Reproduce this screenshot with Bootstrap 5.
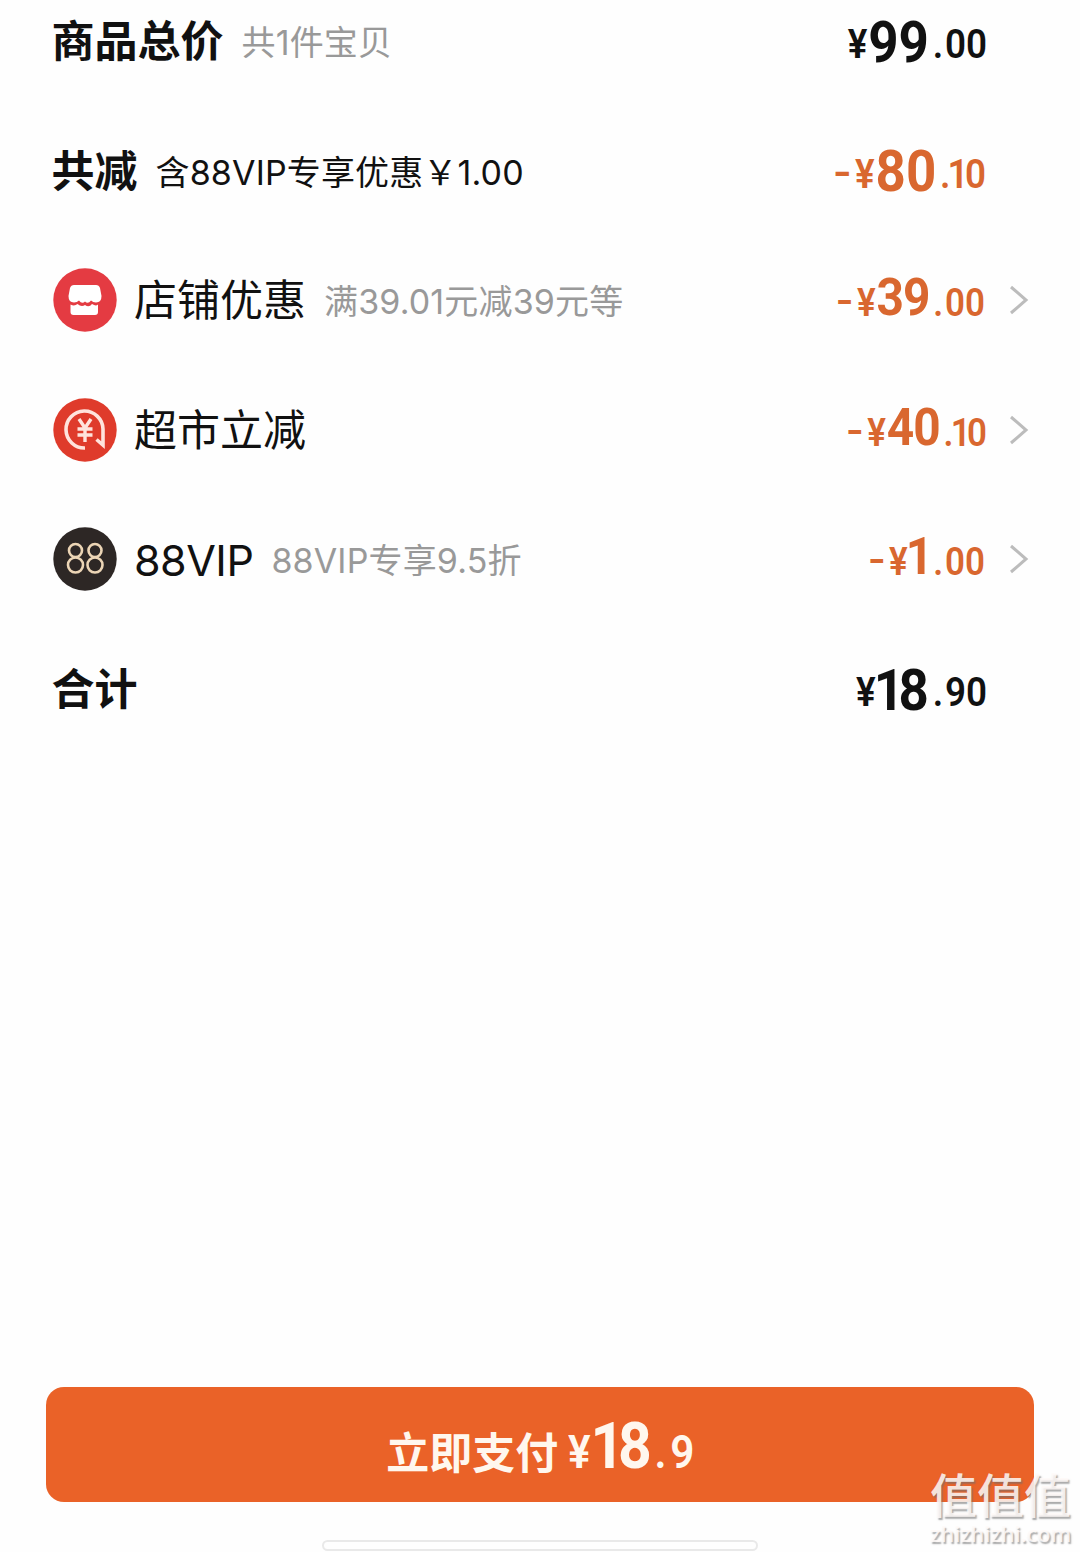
<!DOCTYPE html>
<html lang="zh-CN">
<head>
<meta charset="utf-8">
<meta name="viewport" content="width=device-width, initial-scale=1">
<title>价格明细</title>
<link rel="stylesheet" href="https://cdn.jsdelivr.net/npm/bootstrap@5.3.0/dist/css/bootstrap.min.css">
<style>
body{width:1080px;height:1552px;overflow:hidden;background:#fefefe;color:#111;font-family:Inter,"Noto Sans CJK SC",sans-serif}
.sheet{height:1552px}
.detail-list{gap:47.6px;padding:0 50px 0 52px}
.detail-row{height:82px;line-height:1;white-space:nowrap}
.ttl{font-size:43px;font-weight:700;margin-left:-.5px;padding-top:1px}
.name{font-size:43px;font-weight:400;margin-left:17px;padding-top:1px}
.name.latin{font-weight:400;letter-spacing:-.5px;padding-top:3px}
.note{font-size:34px;font-weight:400;color:#999;margin-left:18px;padding-top:4px;letter-spacing:.15px}
.note.dark{color:#111}
.ico{width:64px;height:64px;flex:none;margin-left:1px}
.amount{font-family:Roboto,sans-serif;font-weight:700;transform-origin:right center;transform:scaleX(.92);width:220px;margin-left:auto;margin-right:43px;padding-top:3px}
.amount .s{font-size:40px;font-weight:600;position:relative;top:-3.500px}
.amount .b{font-size:57.5px;margin-left:1px}
.amount .dot{margin:0 2px 0 4px}
.amount .neg{display:inline-block;transform:scaleX(1.35);transform-origin:right center;margin-right:4px;position:relative;top:-2px}
.amount.cut{color:#d9672f}
.amount.item{padding:0 0 4px;margin-right:19px}
.amount.item .b{font-size:52px;letter-spacing:-1px}
.amount.item .s{font-size:38px;top:1px}
.amount.ten .one{letter-spacing:-4px}
.amount.ten .dot{margin:0 -3px 0 4px}
.amount.ten{margin-right:44px}
.amount.item.ten{margin-right:17px}
.amount.lead-one .b{margin-left:-2px}
.amount.lead-one .b .one{letter-spacing:-6px}
.amount.item.lead-one .b{margin-left:-2px}
.amount.item.lead-one .dot{margin-left:1px}
.arrow{width:26px;height:34px;flex:none}
.pay{height:115px;margin:0 46px 50px;padding:28px 0 0 12px;border-radius:18px;background:#ea6228;color:#fff7ee;line-height:1;border:0}
.pay-label{font-size:43px;font-weight:600;font-family:"Noto Sans CJK SC",sans-serif;position:relative;top:1px}
.pay-sum{font-family:Roboto,sans-serif;font-weight:700;margin-left:10px;transform:scaleX(.92);transform-origin:left center}
.pay-sum .b{font-size:64px}
.pay-sum .one{letter-spacing:-7px}
.pay-sum .s{font-size:46px;font-weight:600}
.pay-sum .dot{margin:0 4px 0 3px}
.homebar{position:absolute;left:322px;top:1540px;width:436px;height:11px;border:2px solid #e9e9e9;border-radius:6px}
.wm{position:absolute;left:930px;top:1469px;width:150px;line-height:1;color:rgba(255,250,248,.86);text-shadow:1.500px 1.500px 1.500px rgba(110,110,110,.6)}
.wm-a{font:500 47px/48px "Noto Sans CJK SC",sans-serif}
.wm-b{font:600 21.700px/28px "Open Sans",sans-serif;margin-top:3px}
</style>
<script src="https://cdn.jsdelivr.net/npm/bootstrap@5.3.0/dist/js/bootstrap.bundle.min.js"></script>
</head>
<body>
<main class="sheet position-relative d-flex flex-column justify-content-between">
<section class="detail-list d-flex flex-column">
<div class="detail-row d-flex align-items-center"><span class="ttl">商品总价</span><span class="note">共1件宝贝</span>
<span class="amount text-end"><span class="s">¥</span><span class="b">99</span><span class="s dot">.</span><span class="s">00</span></span></div>
<div class="detail-row d-flex align-items-center"><span class="ttl">共减</span><span class="note dark">含88VIP专享优惠￥1.00</span>
<span class="amount cut ten text-end"><span class="s"><span class="neg">-</span>¥</span><span class="b">80</span><span class="s dot">.</span><span class="s"><span class="one">1</span>0</span></span></div>
<div class="detail-row d-flex align-items-center">
<svg class="ico" viewBox="0 0 64 64"><circle cx="32" cy="32" r="31.7" fill="#e43b42"/><path d="M21 17h22q3 0 4 3l1.500 8q0 6.500-5.500 6.500-3 0-5-2-3 4-6 1-3 3-6-1-2 2-5 2-5.500 0-5.500-6.500l1.500-8q1-3 4-3z" fill="#fff"/><path d="M17.500 36.500q4 2 7-.5 4 3.500 7.500 1 4 3 7-1 4 2.500 6 .5v7.500q0 3-3 3H20.500q-3 0-3-3z" fill="#fff"/></svg>
<span class="name">店铺优惠</span><span class="note">满39.01元减39元等</span>
<span class="amount item cut text-end"><span class="s"><span class="neg">-</span>¥</span><span class="b">39</span><span class="s dot">.</span><span class="s">00</span></span>
<svg class="arrow" viewBox="0 0 26 34"><path d="M7 4l15 13L7 30" fill="none" stroke="#bcbcbc" stroke-width="3"/></svg></div>
<div class="detail-row d-flex align-items-center">
<svg class="ico" viewBox="0 0 64 64"><circle cx="32" cy="32" r="31.700" fill="#df3b2b"/><g fill="none" stroke="#ffe3dc" stroke-width="3.600"><path d="M32 50A18.500 18.500 0 1 1 50 31V47L43.500 41.500"/><path d="M26 21l6 9 6-9M32 30v14M24.500 31h15M24.500 37h15" stroke-width="3.400"/></g></svg>
<span class="name">超市立减</span>
<span class="amount item cut ten text-end"><span class="s"><span class="neg">-</span>¥</span><span class="b">40</span><span class="s dot">.</span><span class="s"><span class="one">1</span>0</span></span>
<svg class="arrow" viewBox="0 0 26 34"><path d="M7 4l15 13L7 30" fill="none" stroke="#bcbcbc" stroke-width="3"/></svg></div>
<div class="detail-row d-flex align-items-center">
<svg class="ico" viewBox="0 0 64 64"><circle cx="32" cy="32" r="31.700" fill="#2d2725"/><g fill="none" stroke="#ecd5b5" stroke-width="2.600"><circle cx="22.500" cy="23.500" r="6.500"/><circle cx="22.500" cy="38" r="7.500"/><circle cx="42" cy="23.500" r="6.500"/><circle cx="42" cy="38" r="7.500"/></g></svg>
<span class="name latin">88VIP</span><span class="note">88VIP专享9.5折</span>
<span class="amount item cut lead-one text-end"><span class="s"><span class="neg">-</span>¥</span><span class="b">1</span><span class="s dot">.</span><span class="s">00</span></span>
<svg class="arrow" viewBox="0 0 26 34"><path d="M7 4l15 13L7 30" fill="none" stroke="#bcbcbc" stroke-width="3"/></svg></div>
<div class="detail-row d-flex align-items-center"><span class="ttl">合计</span>
<span class="amount lead-one text-end"><span class="s">¥</span><span class="b"><span class="one">1</span>8</span><span class="s dot">.</span><span class="s">90</span></span></div>
</section>
<button class="pay btn d-flex justify-content-center align-items-baseline"><span class="pay-label">立即支付</span><span class="pay-sum"><span class="s">¥</span><span class="b"><span class="one">1</span>8</span><span class="s dot">.</span><span class="s">9</span></span></button>
<div class="homebar"></div>
<div class="wm"><div class="wm-a">值值值</div><div class="wm-b">zhizhizhi.com</div></div>
</main>
</body>
</html>
